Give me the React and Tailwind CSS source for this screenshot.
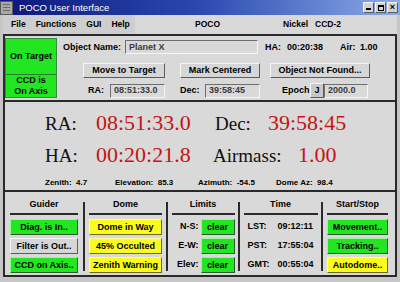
import React from 'react';

const raised = 'border border-t-[#f6f6f6] border-l-[#f6f6f6] border-b-[#5c5c5c] border-r-[#5c5c5c]';
const sunken = 'border border-t-[#6e6e6e] border-l-[#6e6e6e] border-b-[#f6f6f6] border-r-[#f6f6f6]';
const greenBtn = 'bg-[#22e622] border border-t-[#9af59a] border-l-[#9af59a] border-b-[#2d5a2d] border-r-[#2d5a2d]';
const yellowBtn = 'bg-[#fbfb1e] border border-t-[#fdfd9c] border-l-[#fdfd9c] border-b-[#6a6a1a] border-r-[#6a6a1a]';
const grayBtn = 'bg-[#d6d6d6] border border-t-[#f6f6f6] border-l-[#f6f6f6] border-b-[#5c5c5c] border-r-[#5c5c5c]';

function TitleBar() {
  return (
    <div className="flex h-[15px] items-center bg-gradient-to-r from-[#0d157a] via-[#2c49b0] to-[#8eaae6]">
      <div className="flex h-[14px] w-[13px] flex-col justify-center gap-[2px] border border-[#5a5a5a] bg-[#a8a8a8] px-[2px]">
        <div className="h-px bg-[#6a6a6a]" />
        <div className="h-px bg-[#6a6a6a]" />
        <div className="h-px bg-[#6a6a6a]" />
      </div>
      <span className="ml-[6px] text-[9.5px] leading-none text-white">POCO User Interface</span>
      <div className="ml-auto mr-[2px] flex gap-px">
        <div className={`flex h-[11px] w-[11px] items-end justify-center bg-[#d2d2d2] pb-[2px] ${raised}`}>
          <div className="h-[2px] w-[5px] bg-black" />
        </div>
        <div className={`flex h-[11px] w-[11px] items-center justify-center bg-[#d2d2d2] ${raised}`}>
          <div className="h-[6px] w-[6px] border border-t-2 border-black" />
        </div>
        <div className={`flex h-[11px] w-[11px] items-center justify-center bg-[#d2d2d2] text-[9px] font-bold leading-none ${raised}`}>×</div>
      </div>
    </div>
  );
}

function MenuBar() {
  return (
    <div className="flex h-[19px] items-center bg-[#d8d8d8] text-[8.5px] font-bold">
      <div className="flex h-full w-[132px] items-center bg-[#cecece]">
        <span className="ml-[8px]">File</span>
        <span className="ml-[10px]">Functions</span>
        <span className="ml-[10px]">GUI</span>
        <span className="ml-[10px]">Help</span>
      </div>
      <span className="ml-[60px]">POCO</span>
      <span className="ml-[63px]">Nickel</span>
      <span className="ml-[7px]">CCD-2</span>
    </div>
  );
}

function Field({ w, children }) {
  return (
    <div className={`flex h-[14px] items-center bg-[#d9d9d9] pl-[3px] text-[9px] leading-none text-[#3a3a3a] ${w} ${sunken}`}>
      {children}
    </div>
  );
}

function Button({ w, children }) {
  return (
    <div className={`flex h-[15px] items-center justify-center bg-[#d6d6d6] text-[9px] font-bold leading-none ${w} ${raised}`}>
      {children}
    </div>
  );
}

function TopPanel() {
  return (
    <div className="flex h-[64px]">
      <div className="mt-[2px] flex h-[60px] w-[52px] flex-col border border-[#3c8a3c] bg-[#22e622] text-center text-[9px] font-bold leading-[11px]">
        <div className="flex h-[37px] items-center justify-center border-b border-[#2d7a2d]">On Target</div>
        <div className="flex flex-1 items-center justify-center">CCD is<br />On Axis</div>
      </div>
      <div className="ml-[6px] flex flex-col text-[9px] font-bold leading-none">
        <div className="mt-[4px] flex h-[14px] items-center">
          <span className="w-[62px]">Object Name:</span>
          <Field w="w-[133px]">Planet X</Field>
          <span className="ml-[7px] w-[22px]">HA:</span>
          <span className="w-[53px]">00:20:38</span>
          <span className="w-[20px]">Air:</span>
          <span>1.00</span>
        </div>
        <div className="mt-[9px] flex">
          <div className="ml-[20px]"><Button w="w-[82px]">Move to Target</Button></div>
          <div className="ml-[15px]"><Button w="w-[80px]">Mark Centered</Button></div>
          <div className="ml-[10px]"><Button w="w-[100px]">Object Not Found...</Button></div>
        </div>
        <div className="mt-[5px] flex h-[15px] items-center">
          <span className="ml-[25px] w-[22px]">RA:</span>
          <Field w="w-[55px]">08:51:33.0</Field>
          <span className="ml-[15px] w-[25px]">Dec:</span>
          <Field w="w-[55px]">39:58:45</Field>
          <span className="ml-[22px] w-[28px]">Epoch</span>
          <div className={`flex h-[15px] w-[14px] items-center justify-center bg-[#c8c8c8] ${raised}`}>J</div>
          <Field w="w-[44px]">2000.0</Field>
        </div>
      </div>
    </div>
  );
}

function BigPanel() {
  const label = "font-['Liberation_Serif',serif] text-[19px] leading-[31px] text-[#111]";
  const value = "font-['Liberation_Serif',serif] text-[22px] leading-[31px] text-[#c41414]";
  return (
    <div className="h-[88px] pt-[5px]">
      <div className="flex items-baseline pl-[40px]">
        <span className={`w-[51px] ${label}`}>RA:</span>
        <span className={`w-[119px] ${value}`}>08:51:33.0</span>
        <span className={`w-[53px] ${label}`}>Dec:</span>
        <span className={value}>39:58:45</span>
      </div>
      <div className="flex items-baseline pl-[40px]">
        <span className={`w-[51px] ${label}`}>HA:</span>
        <span className={`w-[117px] ${value}`}>00:20:21.8</span>
        <span className={`w-[85px] ${label}`}>Airmass:</span>
        <span className={value}>1.00</span>
      </div>
      <div className="mt-[6px] flex pl-[40px] text-[8px] font-bold leading-[12px]">
        <span className="w-[70px]">Zenith:&nbsp; 4.7</span>
        <span className="w-[83px]">Elevation:&nbsp; 85.3</span>
        <span className="w-[78px]">Azimuth:&nbsp; -54.5</span>
        <span>Dome Az:&nbsp; 98.4</span>
      </div>
    </div>
  );
}

function Column({ title, w, inner, children }) {
  return (
    <div className={`flex flex-col items-center ${w}`}>
      <div className="mt-[6px] h-[12px] text-[9px] font-bold leading-[12px]">{title}</div>
      <div className={`mt-[3px] h-[2px] bg-[#2a2a2a] ${inner}`} />
      <div className={`mt-[4px] flex flex-col gap-[3px] ${inner}`}>{children}</div>
    </div>
  );
}

function Sep() {
  return <div className="mt-[10px] h-[69px] w-[2px] bg-[#2a2a2a]" />;
}

function Pill({ cls, children }) {
  return (
    <div className={`flex h-[16px] items-center justify-center text-[9px] font-bold leading-none ${cls}`}>{children}</div>
  );
}

function BottomPanel() {
  return (
    <div className="flex h-[83px]">
      <Column title="Guider" w="w-[78px]" inner="w-[68px]">
        <Pill cls={greenBtn}>Diag. is In..</Pill>
        <Pill cls={grayBtn}>Filter is Out..</Pill>
        <Pill cls={greenBtn}>CCD on Axis..</Pill>
      </Column>
      <Sep />
      <Column title="Dome" w="w-[81px]" inner="w-[73px]">
        <Pill cls={yellowBtn}>Dome in Way</Pill>
        <Pill cls={yellowBtn}>45% Occulted</Pill>
        <Pill cls={yellowBtn}>Zenith Warning</Pill>
      </Column>
      <Sep />
      <Column title="Limits" w="w-[70px]" inner="w-[63px]">
        {['N-S:', 'E-W:', 'Elev:'].map((l) => (
          <div key={l} className="flex h-[16px] items-center text-[9px] font-bold">
            <span className="w-[27px] text-right">{l}</span>
            <div className="ml-[2px] w-[34px]"><Pill cls={greenBtn}>clear</Pill></div>
          </div>
        ))}
      </Column>
      <Sep />
      <Column title="Time" w="w-[81px]" inner="w-[74px]">
        {[['LST:', '09:12:11'], ['PST:', '17:55:04'], ['GMT:', '00:55:04']].map(([l, v]) => (
          <div key={l} className="flex h-[16px] items-center text-[9px] font-bold">
            <span className="ml-[4px] w-[30px]">{l}</span>
            <span>{v}</span>
          </div>
        ))}
      </Column>
      <Sep />
      <Column title="Start/Stop" w="w-[69px]" inner="w-[61px]">
        <Pill cls={greenBtn}>Movement..</Pill>
        <Pill cls={greenBtn}>Tracking..</Pill>
        <Pill cls={yellowBtn}>Autodome..</Pill>
      </Column>
    </div>
  );
}

export default function App() {
  return (
    <div className="h-[282px] w-[400px] overflow-hidden bg-[#c6c6c6] font-['Liberation_Sans',Arial,sans-serif] text-black">
      <TitleBar />
      <div className="px-[3px]">
        <MenuBar />
        <div className="border-x-2 border-t-2 border-b-2 border-[#2a2a2a] bg-[#d9d9d9]">
          <TopPanel />
          <div className="h-[2px] bg-[#2a2a2a]" />
          <BigPanel />
          <div className="h-[2px] bg-[#2a2a2a]" />
          <BottomPanel />
        </div>
      </div>
    </div>
  );
}
